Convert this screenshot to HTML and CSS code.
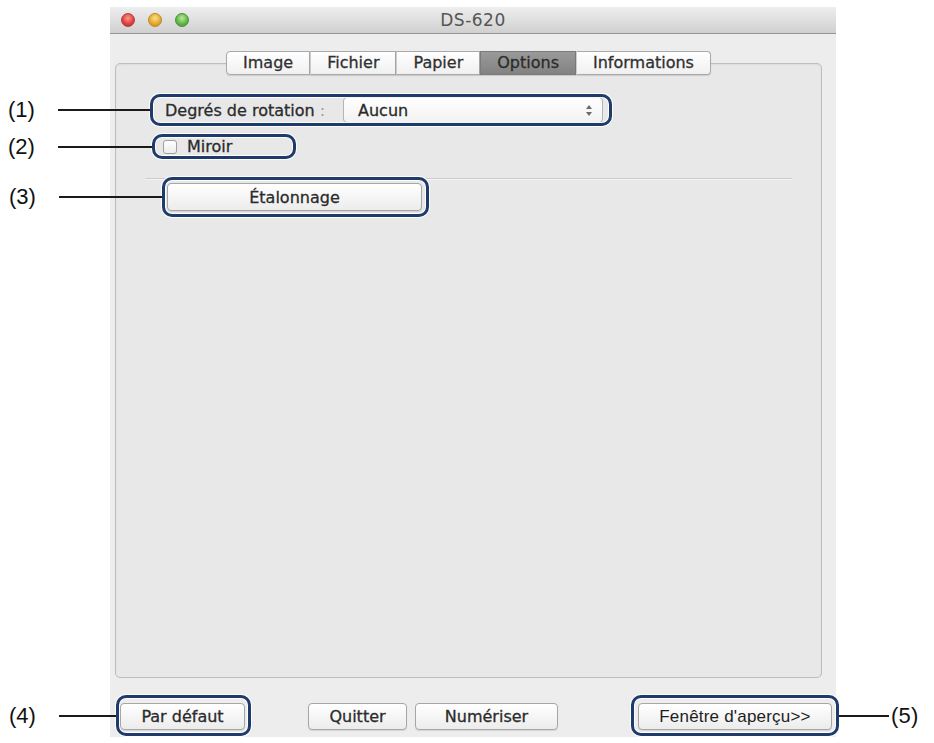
FILE: index.html
```html
<!DOCTYPE html>
<html lang="fr">
<head>
<meta charset="utf-8">
<title>DS-620</title>
<link rel="stylesheet" href="styles.css">
</head>
<body>
<div class="window">
  <div class="titlebar">
    <div class="lights">
      <span class="light red"></span>
      <span class="light yellow"></span>
      <span class="light green"></span>
    </div>
    <div class="title">DS-620</div>
    <div></div>
  </div>
  <div class="content">
    <div class="tabs">
      <div class="tab">Image</div>
      <div class="tab">Fichier</div>
      <div class="tab">Papier</div>
      <div class="tab selected">Options</div>
      <div class="tab">Informations</div>
    </div>
    <div class="panel">
      <div class="hl row-rotation">
        <span class="ring ring-1"><span class="callout callout-left c1"><span class="num">(1)</span><span class="line"></span></span></span>
        <span class="field-label">Degrés de rotation <span class="colon">:</span></span>
        <div class="popup">
          <span>Aucun</span>
          <svg class="arrows" width="8" height="13" viewBox="0 0 8 13"><path d="M4 1 L7 5 H1 Z M4 12 L7 8 H1 Z" fill="#6a6a6a"/></svg>
        </div>
      </div>
      <div class="hl row-mirror">
        <span class="ring ring-2"><span class="callout callout-left c2"><span class="num">(2)</span><span class="line"></span></span></span>
        <span class="checkbox"></span>
        <span class="check-label">Miroir</span>
      </div>
      <div class="separator"></div>
      <div class="hl btn btn-calib">
        <span class="ring ring-3"><span class="callout callout-left c3"><span class="num">(3)</span><span class="line"></span></span></span>
        Étalonnage
      </div>
    </div>
    <div class="bottom">
      <div class="hl btn btn-default">
        <span class="ring ring-4"><span class="callout callout-left c4"><span class="num">(4)</span><span class="line"></span></span></span>
        Par défaut
      </div>
      <div class="mid">
        <div class="btn btn-quit">Quitter</div>
        <div class="btn btn-scan">Numériser</div>
      </div>
      <div class="hl btn btn-preview">
        <span class="ring ring-5"><span class="callout callout-right c5"><span class="line"></span><span class="num">(5)</span></span></span>
        Fenêtre d'aperçu&gt;&gt;
      </div>
    </div>
  </div>
</div>
</body>
</html>
```
FILE: styles.css
```css
html, body {
  margin: 0;
  padding: 0;
  background: #ffffff;
}
body {
  width: 934px;
  height: 743px;
  overflow: hidden;
  font-family: "DejaVu Sans", "Liberation Sans", sans-serif;
  font-size: 16px;
  color: #2b2b2b;
}
.window {
  margin: 7px 0 0 110px;
  width: 726px;
  height: 730px;
  background: #ededed;
  display: flex;
  flex-direction: column;
}
.titlebar {
  height: 27px;
  box-sizing: border-box;
  border-bottom: 1px solid #959595;
  background: linear-gradient(#eeeeee, #d0d0d0);
  display: grid;
  grid-template-columns: 1fr auto 1fr;
  align-items: center;
}
.lights {
  display: flex;
  gap: 13px;
  padding-left: 11px;
}
.light {
  width: 14px;
  height: 14px;
  border-radius: 50%;
  box-sizing: border-box;
}
.red { background: radial-gradient(circle at 50% 35%, #f79a94, #dc3e37 60%, #b8302b); border: 1px solid #b0403a; }
.yellow { background: radial-gradient(circle at 50% 35%, #fbe08e, #e3a62a 60%, #c2871c); border: 1px solid #b98a2a; }
.green { background: radial-gradient(circle at 50% 35%, #b7ea9c, #5cb444 60%, #3f9430); border: 1px solid #4a8f3a; }
.title {
  font-size: 17px;
  letter-spacing: 0.5px;
  color: #555;
}
.content {
  flex: 1;
  display: flex;
  flex-direction: column;
  padding-top: 17px;
}
.tabs {
  margin: 0 14px -12px 5px;
  height: 24px;
  display: flex;
  justify-content: center;
  position: relative;
  z-index: 1;
}
.tab {
  box-sizing: border-box;
  height: 24px;
  line-height: 22px;
  padding: 0 16px;
  border: 1px solid #a9a9a9;
  border-left: 1px solid #cdcdcd;
  background: linear-gradient(#ffffff, #f0f0f0);
  color: #303030;
  -webkit-text-stroke: 0.3px #303030;
  box-shadow: 0 1px 1px rgba(0,0,0,0.12);
}
.tab:first-child { border-left: 1px solid #a9a9a9; border-radius: 4px 0 0 4px; }
.tab:last-child { border-radius: 0 4px 4px 0; }
.tab.selected {
  background: linear-gradient(#9a9a9a, #828282);
  border-color: #7a7a7a;
  color: #2a2a2a;
}
.panel {
  margin: 0 14px 0 5px;
  height: 615px;
  box-sizing: border-box;
  border: 1px solid #bdbdbd;
  border-radius: 5px;
  background: #e8e8e8;
  box-shadow: inset 0 1px 2px rgba(0,0,0,0.06);
  padding-top: 33px;
  display: flex;
  flex-direction: column;
  align-items: flex-start;
}
.hl { position: relative; }
.ring {
  position: absolute;
  border: 3px solid #1f3b6b;
  border-radius: 10px;
  box-shadow: 0 0 0 1px rgba(255,255,255,0.85), inset 0 0 0 1px rgba(255,255,255,0.85);
  z-index: 2;
}
.ring-1, .ring-2 { inset: -3px; }
.ring-3 { inset: -7px -8px -7px -6px; }
.ring-4 { inset: -9px -7px -7px -5px; }
.ring-5 { inset: -9px -8px -7px -8px; }
.callout {
  position: absolute;
  top: 50%;
  transform: translateY(-50%);
  display: flex;
  align-items: center;
  font-family: "Liberation Sans", Arial, sans-serif;
  font-size: 22px;
  color: #111;
  -webkit-text-stroke: 0;
}
.callout-left { right: calc(100% + 3px); }
.callout-right { left: calc(100% + 3px); }
.callout-left .num { width: 50px; }
.callout .line {
  flex: 1;
  height: 2px;
  background: #1a1a1a;
}
.callout-right .line { flex: none; width: 50px; margin-right: 2px; }
.c1 { width: 142px; }
.c2 { width: 144px; }
.c3 { width: 153px; }
.c4 { width: 107px; }
.c5 { width: 90px; }

.row-rotation {
  margin-left: 37px;
  width: 456px;
  height: 26px;
  box-sizing: border-box;
  padding: 0 6px 0 12px;
  display: flex;
  align-items: center;
  justify-content: space-between;
}
.field-label { color: #2b2b2b; -webkit-text-stroke: 0.3px #2b2b2b; }
.colon { color: #9a9a9a; -webkit-text-stroke: 0; }
.popup {
  width: 260px;
  height: 26px;
  box-sizing: border-box;
  border: 1px solid #b4b4b4;
  border-radius: 4px;
  background: linear-gradient(#ffffff, #f2f2f2);
  display: flex;
  align-items: center;
  justify-content: space-between;
  padding: 0 9px 0 14px;
  -webkit-text-stroke: 0.3px #2b2b2b;
}
.row-mirror {
  margin-top: 14px;
  margin-left: 39px;
  width: 138px;
  height: 19px;
  display: flex;
  align-items: center;
}
.checkbox {
  width: 14px;
  height: 14px;
  box-sizing: border-box;
  margin-left: 8px;
  border: 1px solid #a0a0a0;
  border-radius: 3px;
  background: linear-gradient(#ffffff, #ececec);
}
.check-label { margin-left: 10px; -webkit-text-stroke: 0.3px #2b2b2b; }
.separator {
  margin: 22px 0 0 29px;
  width: 647px;
  height: 0;
  border-top: 1px solid #c8cdd3;
  border-bottom: 1px solid #f7f3f3;
}
.btn {
  box-sizing: border-box;
  height: 27px;
  border: 1px solid #a6a6a6;
  border-radius: 4px;
  background: linear-gradient(#ffffff, #ececec);
  box-shadow: 0 1px 1px rgba(0,0,0,0.1);
  display: flex;
  align-items: center;
  justify-content: center;
  color: #2b2b2b;
  -webkit-text-stroke: 0.3px #2b2b2b;
}
.btn-calib {
  margin: 3px 0 0 51px;
  width: 255px;
  height: 28px;
}
.bottom {
  margin-top: 25px;
  height: 27px;
  padding: 0 4px 0 10px;
  display: flex;
}
.btn-default { width: 125px; }
.mid {
  margin-left: 63px;
  display: flex;
  gap: 8px;
}
.btn-quit { width: 99px; }
.btn-scan { width: 143px; }
.btn-preview {
  margin-left: auto;
  width: 194px;
  font-family: "Liberation Sans", Arial, sans-serif;
  font-size: 17px;
  letter-spacing: 0.2px;
  -webkit-text-stroke: 0;
  color: #1e1e1e;
}
```
